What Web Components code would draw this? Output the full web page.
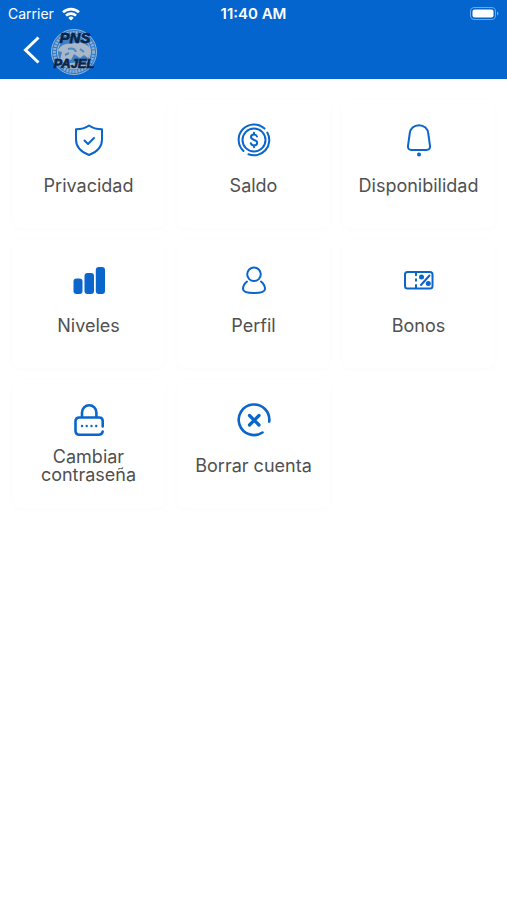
<!DOCTYPE html>
<html lang="es">
<head>
<meta charset="utf-8">
<meta name="viewport" content="width=device-width, initial-scale=1">
<title>Ajustes</title>
<style>
	body {
		margin: 0;
		background: #fff;
		font-family: Inter, "Liberation Sans", sans-serif;
	}
</style>
</head>
<body>
<settings-page></settings-page>

<script>
(function() {
	const icons = {
		shield: `<path d="M20 5.500c3.500 2.500 8 3.700 13 3.700v10.300c0 7-5 12.500-13 15.500-8-3-13-8.500-13-15.500V9.200C12 9.200 16.500 8 20 5.500z"/><path d="M15.500 20.500l3.500 3.500 6-6"/>`,
		coin: `<circle cx="20" cy="20" r="11.500"/><path d="M9.500 31A15.300 15.300 0 0 1 30.500 8.600M33.300 12.500A15.300 15.300 0 0 1 14.500 34.300"/><path d="M23 16.500c-.5-1.300-1.700-1.900-3-1.900-1.700 0-3 .9-3 2.500 0 3.500 6.200 2.200 6.200 5.600 0 1.700-1.400 2.700-3.200 2.700-1.600 0-2.800-.8-3.200-2.200M20 12.800v1.800M20 25.400v1.800"/>`,
		bell: `<path d="M20 5.200c-5 0-9 3.600-9.300 8.500L9 26c-.3 2.500 1 4 3.500 4h15c2.500 0 3.800-1.500 3.500-4l-1.700-12.300C29 8.800 25 5.200 20 5.200z"/><circle class="solid" cx="20" cy="34.500" r="2"/>`,
		bars: `<g class="solid"><rect x="4.500" y="18.500" width="9" height="15.500" rx="3"/><rect x="15.500" y="13" width="9.500" height="21" rx="3"/><rect x="26.800" y="7" width="9.200" height="27" rx="3"/></g>`,
		person: `<circle cx="20" cy="14.300" r="6.800"/><path d="M13 21.500C10.500 23.500 9 26.500 9 29c0 3 5.500 4 11 4s11-1 11-4c0-2.500-1.500-5.500-4-7.500"/>`,
		ticket: `<rect x="6" y="12" width="27.500" height="16.500" rx="2.500"/><path d="M17 12v3.200M17 19.200v1.600M17 25v3.200M30.500 15.500l-8.500 9.500"/><circle class="solid" cx="22.500" cy="17" r="2.500"/><circle class="solid" cx="29.300" cy="23.500" r="2.500"/>`,
		lock: `<path class="bold" d="M13 17.500v-5a7.200 7.200 0 0 1 14.400 0v5M33.700 26.500V21c0-2.500-1.200-3.500-3.500-3.500H10.500C8 17.500 6.500 19 6.500 21.500v9c0 2.700 1.500 4.300 4 4.300h19c2.200 0 3.700-.8 4.200-3.300"/><g class="solid"><circle cx="13" cy="26" r="1.200"/><circle cx="17.700" cy="26" r="1.200"/><circle cx="22.500" cy="26" r="1.200"/><circle cx="27.200" cy="26" r="1.200"/></g>`,
		remove: `<path class="bold" d="M35.200 21.700A15.300 15.300 0 1 0 28.500 32.500"/><path class="thick" d="M15.500 15.500l9.500 9.500M25 15.500l-9.500 9.500"/>`
	};

	function createTemplate(html) {
		const template = document.createElement("template");
		template.innerHTML = html;
		return template;
	}

	const statusTemplate = createTemplate(`
		<style>
		:host {
			display: grid;
			grid-template-columns: 1fr auto 1fr;
			align-items: center;
			height: 27px;
			padding: 0 8px;
			font-size: 14px;
		}
		.left {
			display: flex;
			align-items: center;
			gap: 8px;
		}
		.time {
			font-size: 15px;
			font-weight: 600;
		}
		.battery {
			justify-self: end;
		}
		svg {
			display: block;
		}
		</style>
		<div class="left">
			<span>Carrier</span>
			<svg width="18" height="14" viewBox="0 0 18 14" fill="none" stroke="#fff" stroke-width="2.600" aria-hidden="true">
				<path d="M1 5.300a11.600 11.600 0 0 1 16 0M4 8.600a7.200 7.200 0 0 1 10 0"/>
				<path d="M6.400 10.900a3.700 3.700 0 0 1 5.200 0L9 13.600z" fill="#fff" stroke="none"/>
			</svg>
		</div>
		<span class="time">11:40 AM</span>
		<svg class="battery" width="29" height="14" viewBox="0 0 29 14" aria-hidden="true">
			<rect x=".5" y=".5" width="25" height="12" rx="3.500" fill="none" stroke="#6ea9e6"/>
			<rect x="2.500" y="2.500" width="21" height="8" rx="2" fill="#fff"/>
			<path d="M27 4.500c2 .8 2 3.200 0 4z" fill="#6ea9e6"/>
		</svg>
	`);

	class StatusBar extends HTMLElement {
		constructor() {
			super();
			this.attachShadow({mode: "open"});
			this.shadowRoot.appendChild(statusTemplate.content.cloneNode(true));
		}
	}

	const logoTemplate = createTemplate(`
		<style>
		:host {
			display: block;
		}
		svg {
			display: block;
			overflow: visible;
		}
		text {
			font-family: "Liberation Sans Narrow", "Liberation Sans", sans-serif;
			font-size: 15px;
			font-weight: 700;
			font-style: italic;
			fill: #0b2347;
			stroke: #0b2347;
			stroke-width: .6;
			text-anchor: middle;
		}
		.small {
			font-size: 13px;
		}
		</style>
		<svg width="48" height="48" viewBox="0 0 48 48">
			<circle cx="24" cy="24" r="22.500" fill="#2f78c6" stroke="#9bb8d6"/>
			<circle cx="24" cy="24" r="19.500" fill="none" stroke="#8fb0d2" stroke-width="3" stroke-dasharray="2 1"/>
			<circle cx="24" cy="24" r="16.500" fill="#3f80c5" stroke="#a9bfd5"/>
			<path d="M8 23c2-6 8-8 14-7 5-3 14-1 18 4 1 4 0 8-2 10l-4-3-4 3-6-4-3 6-5-2-2 6-4-4 2-8z" fill="#a8b8c8"/>
			<path d="M18 21c4-1 7 0 8 3M30 21l4 3M15 27l4-2" fill="none" stroke="#4f88c3" stroke-width="2"/>
			<path d="M12 37c7-3 17-3 24 0-7 6-17 6-24 0z" fill="#9fb5cb"/>
			<text x="25" y="15">PNS</text>
			<text class="small" x="24" y="40">PAJEL</text>
		</svg>
	`);

	class ClubLogo extends HTMLElement {
		constructor() {
			super();
			this.attachShadow({mode: "open"});
			this.shadowRoot.appendChild(logoTemplate.content.cloneNode(true));
		}
	}

	const headerTemplate = createTemplate(`
		<style>
		:host {
			display: block;
			background: #0365cd;
			color: #fff;
		}
		nav {
			display: flex;
			align-items: flex-start;
			padding: 1px 16px 3px;
		}
		button {
			width: 34px;
			height: 44px;
			padding: 0 0 0 6px;
			border: 0;
			background: none;
			color: inherit;
			cursor: pointer;
		}
		svg {
			display: block;
		}
		</style>
		<status-bar></status-bar>
		<nav>
			<button type="button" aria-label="Volver">
				<svg width="20" height="30" viewBox="0 0 20 30" fill="none" stroke="currentColor" stroke-width="3" aria-hidden="true">
					<path d="M16.500 2.500L3.500 15l13 12.500"/>
				</svg>
			</button>
			<slot></slot>
		</nav>
	`);

	class AppHeader extends HTMLElement {
		constructor() {
			super();
			this.attachShadow({mode: "open"});
			this.shadowRoot.appendChild(headerTemplate.content.cloneNode(true));
		}
	}

	const tileTemplate = createTemplate(`
		<style>
		:host {
			display: block;
		}
		button {
			display: flex;
			flex-direction: column;
			align-items: center;
			gap: 8px;
			box-sizing: border-box;
			width: 100%;
			min-height: 128px;
			padding: 20px 8px;
			border: 0;
			border-radius: 8px;
			background: #fff;
			box-shadow: 0 1px 6px rgba(0, 0, 0, .02);
			color: #505050;
			font: inherit;
			font-size: 18px;
			line-height: 18px;
			cursor: pointer;
		}
		svg {
			fill: none;
			stroke: #0a66cb;
			stroke-width: 2;
			stroke-linecap: round;
			stroke-linejoin: round;
		}
		.solid {
			fill: #0a66cb;
			stroke: none;
		}
		.bold {
			stroke-width: 2.600;
		}
		.thick {
			stroke-width: 3.200;
		}
		.label {
			display: flex;
			align-items: center;
			min-height: 36px;
		}
		</style>
		<button type="button">
			<svg width="40" height="40" viewBox="0 0 40 40" aria-hidden="true"></svg>
			<span class="label"><slot></slot></span>
		</button>
	`);

	class MenuTile extends HTMLElement {
		constructor() {
			super();
			this.attachShadow({mode: "open"});
			this.shadowRoot.appendChild(tileTemplate.content.cloneNode(true));
		}

		connectedCallback() {
			this.shadowRoot.querySelector("svg").innerHTML = icons[this.getAttribute("icon")] || "";
		}
	}

	const pageTemplate = createTemplate(`
		<style>
		:host {
			display: block;
		}
		main {
			display: grid;
			grid-template-columns: repeat(3, minmax(0, 1fr));
			gap: 12px;
			padding: 21px 12px;
		}
		</style>
		<app-header><club-logo></club-logo></app-header>
		<main>
			<menu-tile icon="shield">Privacidad</menu-tile>
			<menu-tile icon="coin">Saldo</menu-tile>
			<menu-tile icon="bell">Disponibilidad</menu-tile>
			<menu-tile icon="bars">Niveles</menu-tile>
			<menu-tile icon="person">Perfil</menu-tile>
			<menu-tile icon="ticket">Bonos</menu-tile>
			<menu-tile icon="lock">Cambiar<br>contraseña</menu-tile>
			<menu-tile icon="remove">Borrar cuenta</menu-tile>
		</main>
	`);

	class SettingsPage extends HTMLElement {
		constructor() {
			super();
			this.attachShadow({mode: "open"});
			this.shadowRoot.appendChild(pageTemplate.content.cloneNode(true));
		}
	}

	customElements.define("status-bar", StatusBar);
	customElements.define("club-logo", ClubLogo);
	customElements.define("app-header", AppHeader);
	customElements.define("menu-tile", MenuTile);
	customElements.define("settings-page", SettingsPage);
})();
</script>
</body>
</html>
